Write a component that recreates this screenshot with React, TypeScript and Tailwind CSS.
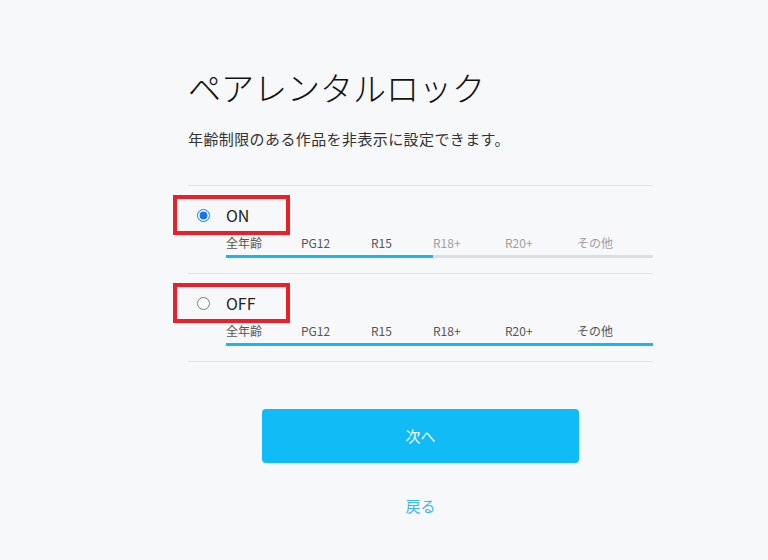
import React from 'react';

const FONT = { fontFamily: '"Noto Sans CJK JP", "Noto Sans", sans-serif' };

const ratings = [
  { label: '全年齢', w: 'w-[75px]' },
  { label: 'PG12', w: 'w-[70px]' },
  { label: 'R15', w: 'w-[62px]' },
  { label: 'R18+', w: 'w-[72px]' },
  { label: 'R20+', w: 'w-[72px]' },
  { label: 'その他', w: 'flex-1' },
];

function Option({
  name,
  checked,
  allowed,
}: {
  name: string;
  checked: boolean;
  allowed: number;
}) {
  return (
    <div className="relative border-b border-[#e2e4e7] pt-[9px] pb-[15px]">
      <label className="flex h-[40px] items-center pl-[9px]">
        <input
          type="radio"
          name="lock"
          defaultChecked={checked}
          className="m-0 h-[13px] w-[13px] accent-[#1a73e8]"
        />
        <span className="ml-[16px] text-[16px] leading-none text-[#222]">{name}</span>
      </label>
      <div className="ml-[38px] flex h-[16px] items-center text-[12px] leading-none">
        {ratings.map((r, i) => (
          <span key={r.label} className={`${r.w} ${i < allowed ? 'text-[#555]' : 'text-[#a0a0a0]'}`}>
            {r.label}
          </span>
        ))}
      </div>
      <div className="ml-[38px] mt-[4px] flex h-[3px] bg-[#dcdde0]">
        <div className={allowed === 6 ? 'w-full bg-[#1ab6f0]' : 'w-[207px] bg-[#1ab6f0]'} />
      </div>
      <div className="pointer-events-none absolute left-[-15px] top-[9px] h-[40px] w-[117px] border-4 border-[#e8202a]" />
    </div>
  );
}

export default function App() {
  return (
    <div className="min-h-[560px] bg-[#f7f8fa]" style={FONT}>
      <div className="ml-[188px] w-[465px] pt-[62px]">
        <h1 className="text-[33px] font-light leading-[50px] text-[#111]">ペアレンタルロック</h1>
        <p className="mt-[15px] text-[15px] leading-[24px] tracking-[0.4px] text-[#333]">
          年齢制限のある作品を非表示に設定できます。
        </p>
        <div className="mt-[34px] border-t border-[#e2e4e7]">
          <Option name="ON" checked allowed={3} />
          <Option name="OFF" checked={false} allowed={6} />
        </div>
        <div className="flex flex-col items-center">
          <button className="mt-[47px] h-[54px] w-[317px] rounded-[4px] bg-[#10bbf6] text-[15px] text-white">
            次へ
          </button>
          <button className="mt-[32px] text-[15px] leading-[22px] text-[#3ab7ee]">戻る</button>
        </div>
      </div>
    </div>
  );
}
